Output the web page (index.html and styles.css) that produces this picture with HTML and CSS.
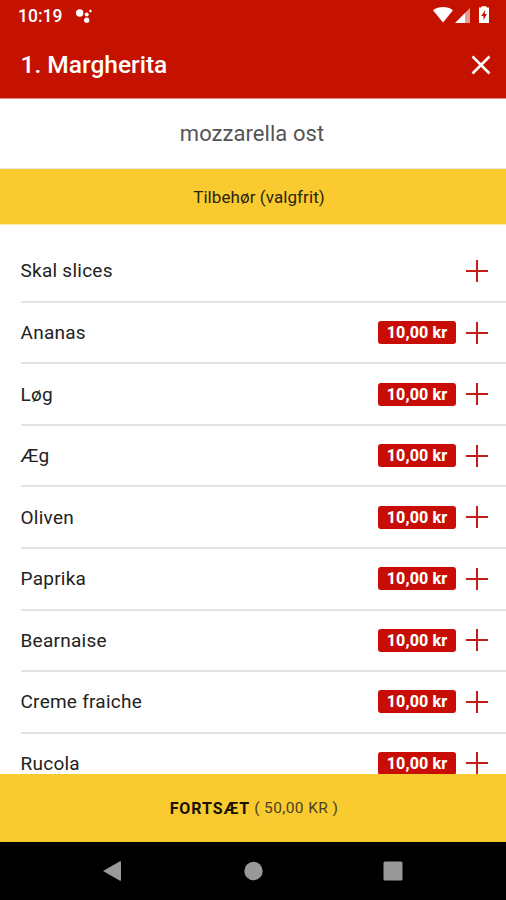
FILE: index.html
```html
<!DOCTYPE html>
<html lang="da">
<head>
<meta charset="utf-8">
<title>Margherita</title>
<link rel="stylesheet" href="styles.css">
</head>
<body>
<div class="screen">
  <header class="top">
    <div class="status">
      <span class="clock">10:19</span>
      <svg class="assistant" width="18" height="16" viewBox="0 0 18 16" fill="#fff"><circle cx="3.700" cy="5" r="3.700"/><circle cx="10.700" cy="6.500" r="2"/><circle cx="10.700" cy="12.200" r="2.600"/><circle cx="14.400" cy="3.100" r="1.300"/></svg>
      <svg class="signals" width="60" height="20" viewBox="0 0 60 20"><path fill="#fff" d="M1 5.200C6.500 1 15.500 1 21 5.200L11 17.500Z"/><path fill="#e99a93" d="M38 3v15H33V8Z"/><path fill="#fff" d="M33 8v10H23Z"/><path fill="#fff" d="M49.500 2.500V1.300h5v1.200H57V18H47V2.500Z"/><path fill="#c51200" d="M53.200 5l-4 6h2.300v4l3.500-6h-2.300z"/></svg>
    </div>
    <div class="titlebar">
      <h1>1. Margherita</h1>
      <svg class="close" width="20" height="20" viewBox="0 0 20 20" stroke="#fff" stroke-width="2.500"><path d="M1.500 1.500l17 17M18.500 1.500l-17 17"/></svg>
    </div>
  </header>
  <p class="description"><span>mozzarella ost</span></p>
  <h2 class="section">Tilbehør (valgfrit)</h2>
  <main>
    <ul class="list">
      <li><span class="name">Skal slices</span><i class="plus"></i></li>
      <li><span class="name">Ananas</span><b class="price">10,00 kr</b><i class="plus"></i></li>
      <li><span class="name">Løg</span><b class="price">10,00 kr</b><i class="plus"></i></li>
      <li><span class="name">Æg</span><b class="price">10,00 kr</b><i class="plus"></i></li>
      <li><span class="name">Oliven</span><b class="price">10,00 kr</b><i class="plus"></i></li>
      <li><span class="name">Paprika</span><b class="price">10,00 kr</b><i class="plus"></i></li>
      <li><span class="name">Bearnaise</span><b class="price">10,00 kr</b><i class="plus"></i></li>
      <li><span class="name">Creme fraiche</span><b class="price">10,00 kr</b><i class="plus"></i></li>
      <li><span class="name">Rucola</span><b class="price">10,00 kr</b><i class="plus"></i></li>
    </ul>
  </main>
  <div class="continue"><strong>FORTSÆT</strong><span class="total">( 50,00 KR )</span></div>
  <nav class="system">
    <svg width="20" height="22" viewBox="0 0 20 22"><path fill="#999" d="M1 11L17.500 1.500Q19 .8 19 2v18q0 1.200-1.500.5Z"/></svg>
    <svg width="20" height="20" viewBox="0 0 20 20"><circle cx="10.500" cy="10" r="9.200" fill="#999"/></svg>
    <svg width="20" height="20" viewBox="0 0 20 20"><rect x=".5" y=".5" width="19" height="19" rx="1.500" fill="#999"/></svg>
  </nav>
</div>
</body>
</html>
```
FILE: styles.css
```css
* { box-sizing: border-box; margin: 0; padding: 0; }
body { font-family: Roboto, "Liberation Sans", sans-serif; background: #fff; color: #222; }
.screen { width: 506px; height: 900px; display: flex; flex-direction: column; overflow: hidden; }
.top { height: 99px; flex: none; background: #c51200; color: #fff; border-bottom: 1px solid #e38a80; }
.status { height: 32px; display: flex; align-items: center; padding: 0 14px 0 18px; }
.clock { width: 58px; font-size: 17.500px; font-weight: 500; }
.signals { margin-left: auto; margin-top: -2px; }
.titlebar { height: 66px; display: flex; align-items: center; justify-content: space-between; padding: 0 15.500px 0 20.500px; }
h1 { font-size: 24.500px; font-weight: 500; line-height: 66px; }
.description { height: 70px; flex: none; border-bottom: 1px solid #e8e4dc; text-align: center; line-height: 70px; font-size: 22px; letter-spacing: 0.050px; color: #555; padding-right: 2px; }
.section { height: 56px; flex: none; background: #f9cb30; border-bottom: 1px solid #fdebb0; line-height: 56px; text-align: center; font-size: 17px; font-weight: 400; letter-spacing: 0.080px; padding-left: 12px; color: #2b2410; }
main { flex: 1; min-height: 0; overflow: hidden; padding: 16.200px 0 0 20.500px; }
.list { list-style: none; }
.list li { height: 61.570px; display: flex; align-items: center; padding-right: 18px; border-bottom: 2px solid #e3e3e3; }
.name { flex: 1; font-size: 19px; letter-spacing: 0.250px; }
.price { width: 78px; height: 23px; margin-right: 10px; border-radius: 3px; background: #c70d05; color: #fff; text-align: center; font-size: 16px; line-height: 23px; font-weight: 800; letter-spacing: 0.100px; }
.plus { width: 22px; height: 22px; background: linear-gradient(#c51c18, #c51c18) center / 22px 2px no-repeat, linear-gradient(#c51c18, #c51c18) center / 2px 22px no-repeat; }
.continue { height: 68px; flex: none; display: flex; align-items: center; justify-content: center; gap: 4px; padding-left: 2px; background: #f9cb30; font-size: 16px; color: #171204; }
.continue strong { font-weight: 700; letter-spacing: 0.900px; }
.total { color: #4b4220; font-size: 15.500px; letter-spacing: 0.400px; }
.system { height: 58px; flex: none; background: #000; display: flex; align-items: center; justify-content: space-between; padding: 0 103px 0 102px; }
```
